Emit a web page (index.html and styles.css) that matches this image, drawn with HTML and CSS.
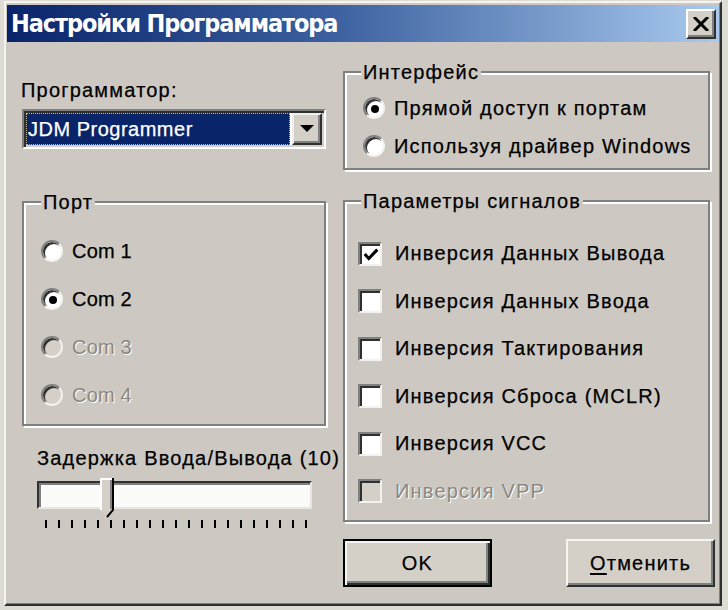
FILE: index.html
```html
<!DOCTYPE html>
<html lang="ru">
<head>
<meta charset="utf-8">
<title>Настройки Программатора</title>
<link rel="stylesheet" href="styles.css">
</head>
<body>
<div class="window">
  <div class="titlebar">
    <span class="title">Настройки Программатора</span>
    <span class="close"><svg width="16" height="14" viewBox="0 0 16 14"><path d="M1 0L15 14M15 0L1 14" stroke="#000" stroke-width="3"/></svg></span>
  </div>
  <div class="client">
    <div class="col left">
      <div class="label">Программатор:</div>
      <div class="combo">
        <div class="combo-value"><span>JDM Programmer</span></div>
        <div class="combo-btn"><svg width="14" height="8" viewBox="0 0 14 8"><path d="M0 0H14L7 7Z" fill="#000"/></svg></div>
      </div>
      <fieldset class="group port">
        <legend>Порт</legend>
        <div class="opts">
          <div class="opt"><span class="radio"></span><span>Com 1</span></div>
          <div class="opt"><span class="radio on"></span><span>Com 2</span></div>
          <div class="opt disabled"><span class="radio"></span><span>Com 3</span></div>
          <div class="opt disabled"><span class="radio"></span><span>Com 4</span></div>
        </div>
      </fieldset>
      <div class="slider-label">Задержка Ввода/Вывода (10)</div>
      <div class="slider">
        <div class="track"></div>
        <svg class="thumb" width="14" height="40" viewBox="0 0 14 40"><path d="M0 0H14V32L7 39L0 32Z" fill="#d4d0c8"/><path d="M1 32V1H12" stroke="#fff" stroke-width="2" fill="none"/><path d="M13 0V32L7 39" stroke="#000" stroke-width="2" fill="none"/><path d="M11 2V31" stroke="#808080" stroke-width="2"/></svg>
        <div class="ticks"></div>
      </div>
    </div>
    <div class="col right">
      <fieldset class="group iface">
        <legend>Интерфейс</legend>
        <div class="opts">
          <div class="opt"><span class="radio on"></span><span>Прямой доступ к портам</span></div>
          <div class="opt"><span class="radio"></span><span>Используя драйвер Windows</span></div>
        </div>
      </fieldset>
      <fieldset class="group signals">
        <legend>Параметры сигналов</legend>
        <div class="opts">
          <div class="opt"><span class="check"><svg width="20" height="20" viewBox="0 0 20 20"><path d="M3 9L7.5 14L17 4" stroke="#000" stroke-width="3.4" fill="none"/></svg></span><span>Инверсия Данных Вывода</span></div>
          <div class="opt"><span class="check"></span><span>Инверсия Данных Ввода</span></div>
          <div class="opt"><span class="check"></span><span>Инверсия Тактирования</span></div>
          <div class="opt"><span class="check"></span><span>Инверсия Сброса (MCLR)</span></div>
          <div class="opt"><span class="check"></span><span>Инверсия VCC</span></div>
          <div class="opt disabled"><span class="check"></span><span>Инверсия VPP</span></div>
        </div>
      </fieldset>
      <div class="buttons">
        <button class="btn default">OK</button>
        <button class="btn"><u>О</u>тменить</button>
      </div>
    </div>
  </div>
</div>
</body>
</html>
```

FILE: styles.css
```css
html, body {
  margin: 0;
  padding: 0;
}
body {
  background: #dedbd5;
  font-family: "Liberation Sans", Arial, sans-serif;
  font-size: 20px;
  letter-spacing: 1.2px;
  color: #000;
  -webkit-text-stroke: 0.25px currentColor;
  overflow: hidden;
}
.window {
  margin: 1px 0 0 4px;
  width: 718px;
  height: 605px;
  box-sizing: border-box;
  border: 2px solid;
  border-color: #f6f4f0 #303030 #303030 #f6f4f0;
  padding: 2px 1px 1px 1px;
  background: #cdc9c2;
  box-shadow: inset -1px -1px 0 #808080;
}
.titlebar {
  height: 37px;
  background: linear-gradient(to right, #0a246a 0%, #3a5f9e 45%, #a9c9ee 100%);
  display: flex;
  align-items: center;
  justify-content: space-between;
  padding: 0 3px 0 4px;
}
.title {
  color: #fff;
  font-family: "DejaVu Sans Condensed", "DejaVu Sans", "Liberation Sans", sans-serif;
  font-stretch: condensed;
  font-weight: bold;
  font-size: 25px;
  letter-spacing: -1.1px;
  line-height: 37px;
  -webkit-text-stroke: 0;
}
.close {
  width: 30px;
  height: 30px;
  box-sizing: border-box;
  background: #d4d0c8;
  border: 2px solid;
  border-color: #fff #303030 #303030 #fff;
  box-shadow: inset -2px -2px 0 #808080;
  display: flex;
  align-items: center;
  justify-content: center;
}
.client {
  display: flex;
  gap: 17px;
  padding: 19px 0 0 15px;
}
.col {
  display: flex;
  flex-direction: column;
}
.left { width: 304px; }
.right { width: 372px; }
.label {
  margin: 18px 0 0 -1px;
  line-height: 22px;
}
.combo {
  margin-top: 8px;
  height: 40px;
  box-sizing: border-box;
  border: 2px solid;
  border-color: #808080 #fff #fff #808080;
  box-shadow: inset 2px 2px 0 #303030, inset -2px -2px 0 #d4d0c8;
  background: #fff;
  display: flex;
  padding: 2px 2px 2px 2px;
}
.combo-value {
  flex: 1;
  background: #0a246a;
  color: #fff;
  outline: 1px dotted #c0b8a0;
  outline-offset: -1px;
  display: flex;
  align-items: center;
  padding-left: 2px;
  margin-right: 2px;
  letter-spacing: 0.5px;
}
.combo-btn {
  width: 30px;
  box-sizing: border-box;
  background: #d4d0c8;
  border: 2px solid;
  border-color: #f0eee8 #303030 #303030 #f0eee8;
  box-shadow: inset -2px -2px 0 #808080;
  display: flex;
  align-items: center;
  justify-content: center;
}
fieldset.group {
  margin: 0;
  padding: 0;
  min-width: 0;
  box-sizing: border-box;
  border: 2px solid #808080;
  box-shadow: inset 2px 2px 0 #fff, 2px 2px 0 #fff;
}
fieldset.group legend {
  padding: 0 2px;
  line-height: 22px;
  background: #cdc9c2;
}
.port {
  margin-top: 42px !important;
  width: 304px;
}
.port legend { margin-left: 17px; }
.port .opts { padding: 14px 0 5px 17px; }
.port .opt { height: 48px; letter-spacing: 0.2px; }
.opts {
  display: flex;
  flex-direction: column;
}
.opt {
  display: flex;
  align-items: center;
  gap: 9px;
  white-space: nowrap;
}
.radio {
  width: 22px;
  height: 22px;
  box-sizing: border-box;
  border-radius: 50%;
  border: 2px solid;
  border-color: #808080 #f4f2ee #f4f2ee #808080;
  box-shadow: inset 2px 2px 0 #303030;
  background: #fff;
  display: flex;
  align-items: center;
  justify-content: center;
  flex: none;
}
.radio.on::after {
  content: "";
  width: 8px;
  height: 8px;
  border-radius: 50%;
  background: #000;
  margin: 1px 0 0 1px;
}
.check {
  width: 24px;
  height: 24px;
  box-sizing: border-box;
  border: 2px solid;
  border-color: #808080 #f4f2ee #f4f2ee #808080;
  box-shadow: inset 2px 2px 0 #303030;
  background: #fff;
  display: flex;
  align-items: center;
  justify-content: center;
  flex: none;
}
.check svg { margin: 2px 0 0 2px; }
.disabled { color: #8a8782; text-shadow: 1px 1px 0 #fff; -webkit-text-stroke: 0; }
.disabled .radio, .disabled .check { background: #d4d0c8; }
.slider-label {
  margin: 21px 0 0 15px;
  line-height: 22px;
  white-space: nowrap;
}
.slider {
  position: relative;
  margin: 12px 0 0 15px;
  width: 275px;
  height: 50px;
}
.track {
  height: 28px;
  box-sizing: border-box;
  border: 2px solid;
  border-color: #303030 #e8e6e0 #e8e6e0 #303030;
  box-shadow: inset 2px 2px 0 #808080;
  background: #fbfbf9;
}
.thumb {
  position: absolute;
  left: 63px;
  top: -3px;
}
.ticks {
  margin: 11px 0 0 8px;
  width: 264px;
  height: 8px;
  background: repeating-linear-gradient(to right, #000 0 2px, transparent 2px 13px);
}
.iface { width: 367px; }
.iface legend, .signals legend { margin-left: 16px; }
.iface .opts { padding: 6px 0 3px 18px; }
.iface .opt { height: 38px; }
.signals {
  width: 367px;
  margin-top: 20px !important;
}
.signals .opts { padding: 18px 0 5px 13px; }
.signals .opt { height: 47.5px; gap: 13px; }
.buttons {
  margin-top: 17px;
  display: flex;
  justify-content: space-between;
}
.btn {
  width: 149px;
  height: 48px;
  box-sizing: border-box;
  font: inherit;
  letter-spacing: 1.2px;
  color: #000;
  background: #d4d0c8;
  border: 2px solid;
  border-color: #f6f4f0 #303030 #303030 #f6f4f0;
  box-shadow: inset -2px -2px 0 #808080;
  padding: 0;
}
.btn.default {
  border: 2px solid #000;
  box-shadow: inset 2px 2px 0 #f6f4f0, inset -2px -2px 0 #303030, inset -4px -4px 0 #808080;
}
.btn u { text-underline-offset: 3px; }
```
